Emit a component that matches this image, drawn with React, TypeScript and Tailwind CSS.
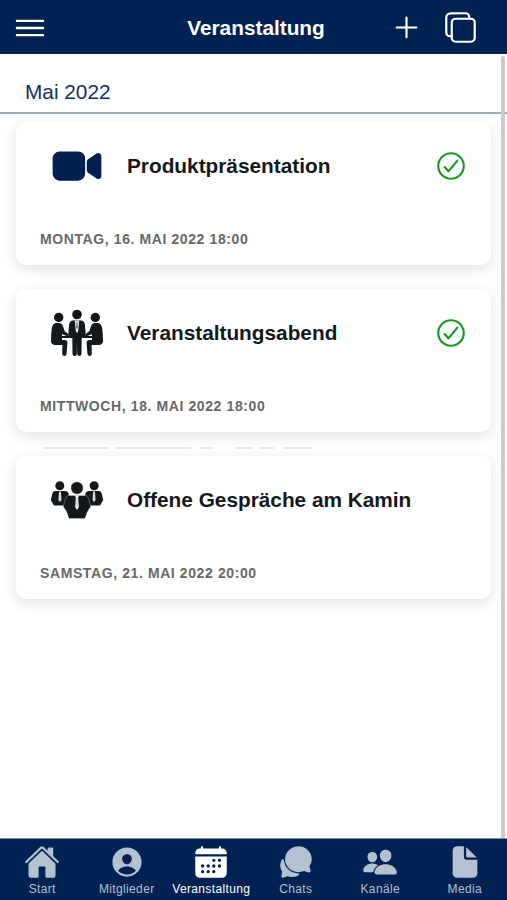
import React from "react";
import {
  IoAddOutline,
  IoCalendar,
  IoChatbubbles,
  IoCheckmarkCircleOutline,
  IoCopyOutline,
  IoDocument,
  IoHome,
  IoMenuOutline,
  IoPeople,
  IoPersonCircle,
  IoVideocam,
} from "react-icons/io5";

interface EventItem {
  title: string;
  date: string;
  accepted: boolean;
  icon: React.ReactNode;
}

function SeatedPerson() {
  return (
    <>
      <circle cx="8.7" cy="9.5" r="4.7" />
      <path d="M5.500 15h4q2.300.3 3.200 2.500l2 5.800 3.600 2.700q1.200 1.600-.8 2.200l-5.500-2V32h2.500q3.300.4 2.900 3.500l-.9 10.500q-.4 2-2.300 2-2.200-.2-2-2.500l.2-8.500H5q-3.800-.3-4-4 0-6 .8-13 .8-4 3.700-5z" />
    </>
  );
}

function MeetingIcon() {
  return (
    <svg width="54" height="50" viewBox="0 0 54 50" fill="#15181b">
      <SeatedPerson />
      <g transform="matrix(-1 0 0 1 54 0)">
        <SeatedPerson />
      </g>
      {/* person in the middle */}
      <circle cx="27" cy="6.500" r="4.800" />
      <path d="M22.500 12.500h9q3 .8 3.500 4.500l.8 11.500H18.200L19 17q.5-3.700 3.500-4.500z" />
      <path d="M24.900 12.800h4.200L28.200 23 27 25l-1.200-2z" fill="#fff" />
      <path d="M26.400 13.500h1.200l.3 6-.9 2-.9-2z" fill="#777a7c" />
      <path d="M10 28h34v2H10z" />
      <path d="M22.300 29h9.400l-.2 17q-.3 2-2.200 2-2 0-2.100-2L27 33l-.2 13q-.1 2-2.100 2t-2.200-2z" />
    </svg>
  );
}

function GroupIcon() {
  return (
    <svg width="54" height="40" viewBox="0 0 54 40" fill="#15181b">
      <circle cx="9.800" cy="5.700" r="4.500" />
      <path d="M4.500 11h11q2.500.4 3 2.500l2 12H4L.8 20l1.700-7q.6-1.600 2-2z" />
      <circle cx="44.200" cy="5.700" r="4.500" />
      <path d="M38.500 11h11q1.400.4 2 2l1.700 7-3.200 5.500H33.500l2-12q.5-2.100 3-2.500z" />
      <path
        d="M9 11.500h1.900l.6 8.500-1.600 2-1.500-2zM43.100 11.500H45l.6 8.500-1.500 2-1.600-2z"
        fill="#d5d7d8"
      />
      <path
        d="M18.500 15.500h17q2.200.3 2.800 2.500l2.500 8.500-3.300 5-2.500 7H19l-2.500-7-3.300-5L15.700 18q.6-2.200 2.800-2.500z"
        stroke="#fff"
        strokeWidth=".3"
      />
      <circle cx="27" cy="8" r="6.200" stroke="#fff" strokeWidth=".4" />
      <path d="M25 15.500h4l-.8 2 .6 9.500-1.800 3-1.800-3 .6-9.500z" fill="#fff" />
      <path d="M26.500 17.500h1l.3 8-.8 2-.8-2z" fill="#c8cacc" />
    </svg>
  );
}

const events: EventItem[] = [
  {
    title: "Produktpräsentation",
    date: "MONTAG, 16. MAI 2022 18:00",
    accepted: true,
    icon: <IoVideocam size={52} color="#00204f" />,
  },
  {
    title: "Veranstaltungsabend",
    date: "MITTWOCH, 18. MAI 2022 18:00",
    accepted: true,
    icon: <MeetingIcon />,
  },
  {
    title: "Offene Gespräche am Kamin",
    date: "SAMSTAG, 21. MAI 2022 20:00",
    accepted: false,
    icon: <GroupIcon />,
  },
];

const tabs = [
  { label: "Start", Icon: IoHome },
  { label: "Mitglieder", Icon: IoPersonCircle },
  { label: "Veranstaltung", Icon: IoCalendar },
  { label: "Chats", Icon: IoChatbubbles },
  { label: "Kanäle", Icon: IoPeople },
  { label: "Media", Icon: IoDocument },
];

function Header() {
  return (
    <header className="grid h-[54px] shrink-0 grid-cols-[1fr_auto_1fr] items-center bg-[#002253] pt-px pl-[11px] pr-[6px] text-white">
      <IoMenuOutline size={38} />
      <h1 className="text-[20.8px] font-bold">Veranstaltung</h1>
      <div className="flex items-center justify-end gap-[19px] pr-[23px]">
        <IoAddOutline size={35} />
        <IoCopyOutline size={35} />
      </div>
    </header>
  );
}

function EventCard({ event }: { event: EventItem }) {
  return (
    <article className="flex h-[143px] shrink-0 flex-col justify-between rounded-[10px] bg-white pb-[17px] pl-[24px] pr-[23px] pt-[14px] shadow-[0_4px_14px_rgba(0,0,0,0.12)]">
      <div className="flex h-[60px] items-center">
        <div className="flex w-[74px] justify-center">{event.icon}</div>
        <h2 className="ml-[13px] flex-1 text-[20.8px] font-bold text-[#15181b]">
          {event.title}
        </h2>
        {event.accepted && (
          <IoCheckmarkCircleOutline size={34} color="#159b1b" />
        )}
      </div>
      <p className="text-[14px] leading-[18px] font-bold tracking-[0.6px] text-[#686868]">
        {event.date}
      </p>
    </article>
  );
}

function RowTrace() {
  return (
    <div className="absolute top-[333px] left-[44px] flex h-[2px]">
      <span className="w-[64px] bg-[#e9e9e9]" />
      <span className="ml-[7px] w-[76px] bg-[#e9e9e9]" />
      <span className="ml-[8px] w-[15px] bg-[#e9e9e9]" />
      <span className="ml-[22px] w-[16px] bg-[#e9e9e9]" />
      <span className="ml-[8px] w-[14px] bg-[#e9e9e9]" />
      <span className="ml-[10px] w-[29px] bg-[#e9e9e9]" />
    </div>
  );
}

function TabBar() {
  return (
    <nav className="grid h-[62px] shrink-0 grid-cols-6 border-t border-[#7c89a3] bg-[#002253]">
      {tabs.map(({ label, Icon }) => (
        <div
          key={label}
          className={
            label === "Veranstaltung"
              ? "flex flex-col items-center pt-[5px] text-white"
              : "flex flex-col items-center pt-[5px] text-[#b3c1d1]"
          }
        >
          <Icon size={36} />
          <span className="mt-px text-[12px] leading-[16px] tracking-[0.35px]">
            {label}
          </span>
        </div>
      ))}
    </nav>
  );
}

export default function App() {
  return (
    <div className="flex h-[900px] w-[507px] flex-col overflow-hidden bg-white font-['Liberation_Sans',Arial,sans-serif]">
      <Header />
      <main className="relative flex-1 overflow-hidden">
        <div className="h-[60px] border-b-2 border-[#a0abc0] pl-[25px] pt-[23px] text-[20.8px] leading-[30px] text-[#14305c]">
          Mai 2022
        </div>
        <div className="relative flex flex-col gap-[24px] px-4 pt-2">
          {events.map((event) => (
            <EventCard key={event.title} event={event} />
          ))}
          <RowTrace />
        </div>
        <div className="absolute top-[2px] right-[2px] bottom-0 w-1 rounded-t bg-[#cbcbcb]" />
      </main>
      <TabBar />
    </div>
  );
}
